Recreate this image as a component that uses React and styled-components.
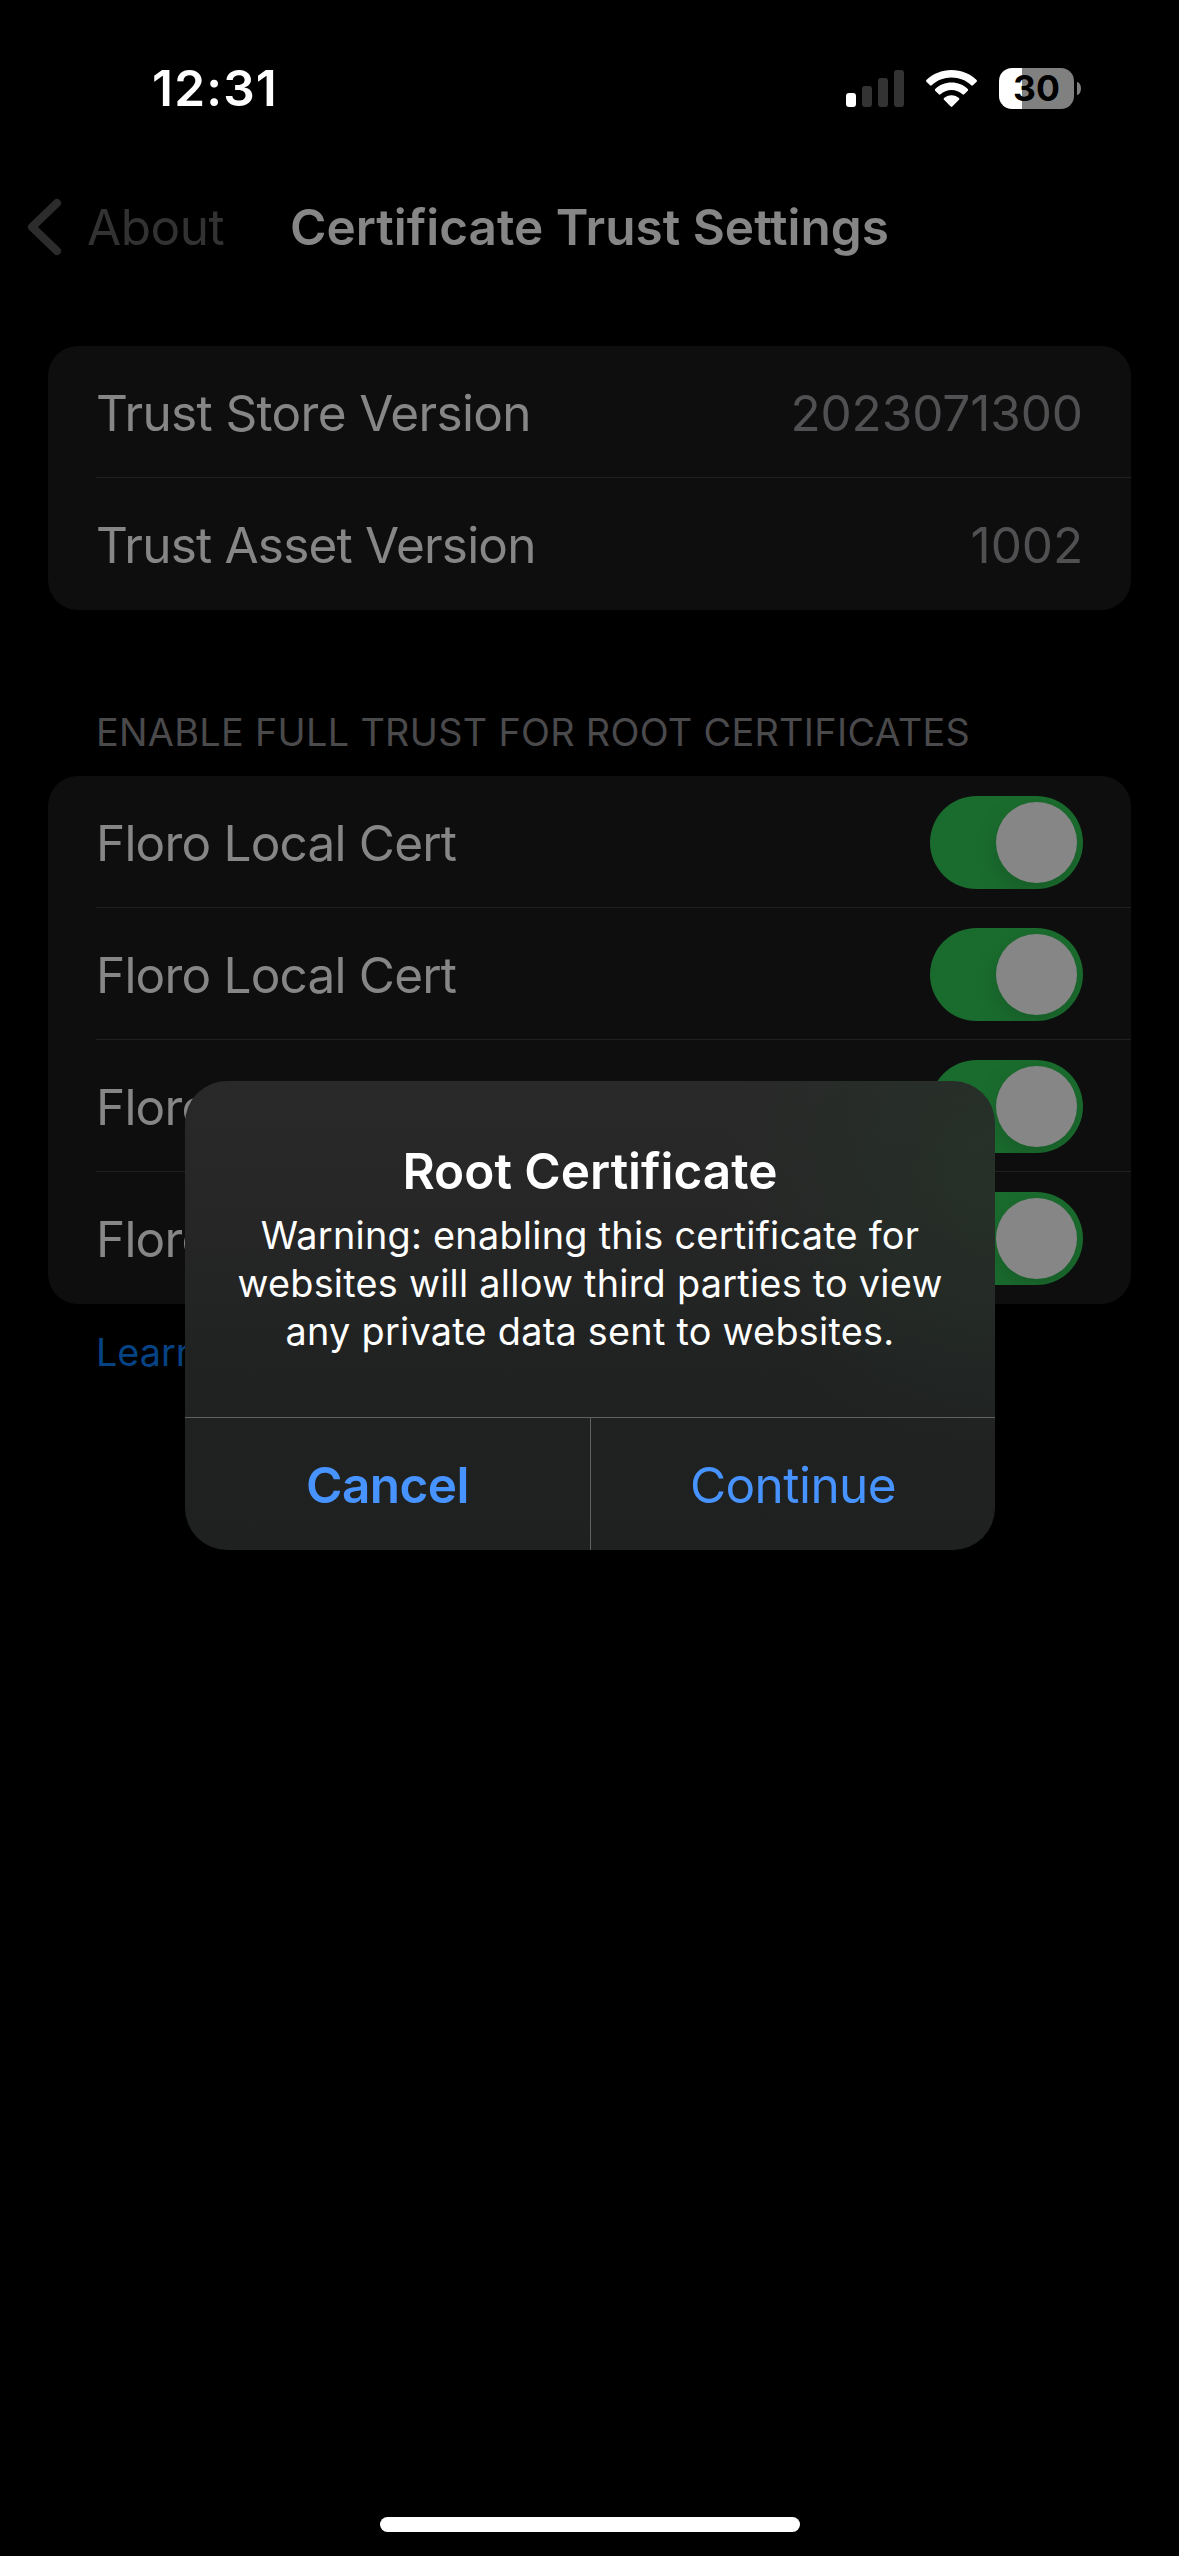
import React from "react";
import styled, { createGlobalStyle } from "styled-components";

const GlobalStyle = createGlobalStyle`
  *, *::before, *::after { box-sizing: border-box; }
  html, body { margin: 0; background: #000; }
  body { font-family: Inter, "Liberation Sans", sans-serif; font-feature-settings: "calt" 0; }
  h1, h2, p { margin: 0; font-size: inherit; font-weight: inherit; }
  button { border: 0; padding: 0; background: none; font: inherit; color: inherit; }
`;

const Screen = styled.div`
  position: relative;
  display: flex;
  flex-direction: column;
  width: 1179px;
  height: 2556px;
  overflow: hidden;
  background: #000;
  font-size: 49.5px;
  line-height: 60px;
  white-space: nowrap;
`;

const StatusBar = styled.header`
  display: flex;
  justify-content: space-between;
  height: 177px;
  padding: 58px 98px 0 152px;
  color: #fff;
`;

const Clock = styled.time`
  font-weight: 600;
  letter-spacing: 1.2px;
`;

const StatusIcons = styled.div`
  display: flex;
  align-items: center;
  height: 60px;
`;

const SignalBars = styled.div`
  display: flex;
  align-items: flex-end;
  gap: 6px;
  height: 37px;
  margin-right: 22px;
`;

const SignalBar = styled.span`
  width: 10px;
  height: ${(p) => p.$height}px;
  border-radius: 3px;
  background: ${(p) => (p.$active ? "#fff" : "#333")};
`;

const BatteryBody = styled.div`
  display: flex;
  align-items: center;
  justify-content: center;
  width: 75px;
  height: 41px;
  margin-left: 22px;
  border-radius: 13px;
  background: linear-gradient(90deg, #fff 0 ${(p) => p.$level}%, #808080 ${(p) => p.$level}% 100%);
  color: #000;
  font-size: 35.5px;
  font-weight: 650;
  line-height: 41px;
`;

const BatteryTip = styled.span`
  width: 4px;
  height: 13px;
  margin-left: 3px;
  border-radius: 0 4px 4px 0 / 0 6.5px 6.5px 0;
  background: #808080;
`;

const NavBar = styled.nav`
  display: grid;
  grid-template-columns: 1fr auto 1fr;
  align-items: center;
  height: 100px;
  padding: 0 27px;
`;

const BackButton = styled.button`
  display: flex;
  align-items: center;
  gap: 25px;
  color: #323232;
  letter-spacing: -0.5px;
`;

const NavTitle = styled.h1`
  font-weight: 600;
  color: #868686;
`;

const Content = styled.main`
  display: flex;
  flex-direction: column;
  padding: 69px 48px 0;
`;

const Card = styled.section`
  display: flex;
  flex-direction: column;
  border-radius: 30px;
  background: #0e0e0e;
  overflow: hidden;
`;

const Row = styled.div`
  display: flex;
  align-items: center;
  justify-content: space-between;
  height: 132px;
  margin-left: 48px;
  padding: 1px 48px 0 0;
  border-bottom: 1px solid #202021;
  color: #868686;

  &:last-child { border-bottom-color: transparent; }
`;

const RowLabel = styled.span`
  padding-top: 2px;
  letter-spacing: ${(p) => p.$tracking}px;
`;

const RowValue = styled(RowLabel)`
  color: #505052;
`;

const SectionHeader = styled.h2`
  padding: 98px 48px 20px;
  font-size: 37.8px;
  line-height: 48px;
  letter-spacing: 0.32px;
  color: #4a4a4c;
`;

const Switch = styled.button`
  display: flex;
  justify-content: flex-end;
  width: 153px;
  height: 93px;
  padding: 6px;
  border-radius: 47px;
  background: #1a6c2e;
  overflow: hidden;
`;

const Knob = styled.span`
  width: 81px;
  height: 81px;
  border-radius: 50%;
  background: #868686;
  box-shadow: 0 9px 24px rgba(0, 0, 0, 0.15);
`;

const LearnMore = styled.a`
  padding: 24px 48px 0;
  font-size: 37.8px;
  line-height: 48px;
  color: #054385;
`;

const Alert = styled.div`
  position: absolute;
  top: 1081px;
  left: 185px;
  display: flex;
  flex-direction: column;
  width: 810px;
  height: 469px;
  border-radius: 42px;
  overflow: hidden;
  color: #fff;
  text-align: center;
  background:
    radial-gradient(ellipse 270px 290px at 100% 18%, rgba(38, 50, 41, 0.85), rgba(38, 50, 41, 0) 100%),
    linear-gradient(180deg, #292929 0%, #262626 30%, #202222 62%, #1f2020 100%);
`;

const AlertBody = styled.div`
  flex: 1;
  padding-top: 60px;
`;

const AlertTitle = styled.h2`
  font-weight: 600;
`;

const AlertMessage = styled.p`
  padding-top: 10px;
  font-size: 37.8px;
  line-height: 48px;
  letter-spacing: 0.27px;
`;

const Line = styled.span`
  display: block;
`;

const AlertActions = styled.div`
  display: grid;
  grid-template-columns: 405px 1fr;
  height: 133px;
  border-top: 1px solid #5f6061;
`;

const AlertButton = styled.button`
  padding-top: 2px;
  color: #4793ff;
  font-weight: ${(p) => (p.$primary ? 600 : 400)};
  letter-spacing: -0.55px;

  & + & { border-left: 1px solid #5f6061; }
`;

const HomeIndicator = styled.div`
  align-self: center;
  width: 420px;
  height: 15px;
  margin: auto 0 24px;
  border-radius: 8px;
  background: #fff;
`;

const certificates = ["Floro Local Cert", "Floro Local Cert", "Floro Local Cert", "Floro Local Cert"];

function WifiIcon() {
  return (
    <svg width="51" height="37" viewBox="0 0 51 37" fill="#fff">
      <path d="M25.5 0C35.2 0 44.2 3.8 50.6 10c.5.5.5 1.2 0 1.700l-3.600 3.600c-.5.5-1.200.5-1.700 0C40 10.400 33 7.600 25.500 7.600S11 10.400 5.700 15.300c-.5.5-1.200.5-1.700 0L.4 11.700c-.5-.5-.5-1.200 0-1.700C6.800 3.800 15.800 0 25.500 0Z" />
      <path d="M25.5 12.600c6.300 0 12 2.400 16.300 6.400.5.5.5 1.200 0 1.700l-3.600 3.600c-.5.500-1.200.5-1.700 0-2.900-2.600-6.800-4.200-11-4.200s-8.100 1.600-11 4.200c-.5.5-1.200.5-1.700 0l-3.600-3.600c-.5-.5-.5-1.200 0-1.700 4.300-4 10-6.400 16.300-6.400Z" />
      <path d="M25.500 25.200c2.900 0 5.500 1.100 7.500 2.800.5.500.5 1.200 0 1.700l-6.700 6.800c-.5.500-1.100.5-1.600 0L18 29.700c-.5-.5-.5-1.200 0-1.700 2-1.700 4.600-2.800 7.500-2.800Z" />
    </svg>
  );
}

function BackIcon() {
  return (
    <svg width="35" height="58" viewBox="0 0 35 58" fill="none" stroke="#2c2c2c" strokeWidth="8" strokeLinecap="round" strokeLinejoin="round">
      <path d="M30 5 5 29l25 24" />
    </svg>
  );
}

export default function App() {
  return (
    <>
      <GlobalStyle />
      <Screen>
        <StatusBar>
          <Clock>12:31</Clock>
          <StatusIcons>
            <SignalBars>
              <SignalBar $height={14} $active />
              <SignalBar $height={21} />
              <SignalBar $height={29} />
              <SignalBar $height={37} />
            </SignalBars>
            <WifiIcon />
            <BatteryBody $level={30.7}>30</BatteryBody>
            <BatteryTip />
          </StatusIcons>
        </StatusBar>
        <NavBar>
          <BackButton>
            <BackIcon />
            About
          </BackButton>
          <NavTitle>Certificate Trust Settings</NavTitle>
        </NavBar>
        <Content>
          <Card>
            <Row>
              <RowLabel $tracking={-0.65}>Trust Store Version</RowLabel>
              <RowValue $tracking={-0.1}>2023071300</RowValue>
            </Row>
            <Row>
              <RowLabel $tracking={-0.8}>Trust Asset Version</RowLabel>
              <RowValue $tracking={-0.1}>1002</RowValue>
            </Row>
          </Card>
          <SectionHeader>ENABLE FULL TRUST FOR ROOT CERTIFICATES</SectionHeader>
          <Card>
            {certificates.map((name, i) => (
              <Row key={i}>
                <RowLabel $tracking={-0.8}>{name}</RowLabel>
                <Switch role="switch" aria-checked="true">
                  <Knob />
                </Switch>
              </Row>
            ))}
          </Card>
          <LearnMore>Learn More</LearnMore>
        </Content>
        <HomeIndicator />
        <Alert role="alertdialog">
          <AlertBody>
            <AlertTitle>Root Certificate</AlertTitle>
            <AlertMessage>
              <Line>Warning: enabling this certificate for</Line>
              <Line>websites will allow third parties to view</Line>
              <Line>any private data sent to websites.</Line>
            </AlertMessage>
          </AlertBody>
          <AlertActions>
            <AlertButton $primary>Cancel</AlertButton>
            <AlertButton>Continue</AlertButton>
          </AlertActions>
        </Alert>
      </Screen>
    </>
  );
}
